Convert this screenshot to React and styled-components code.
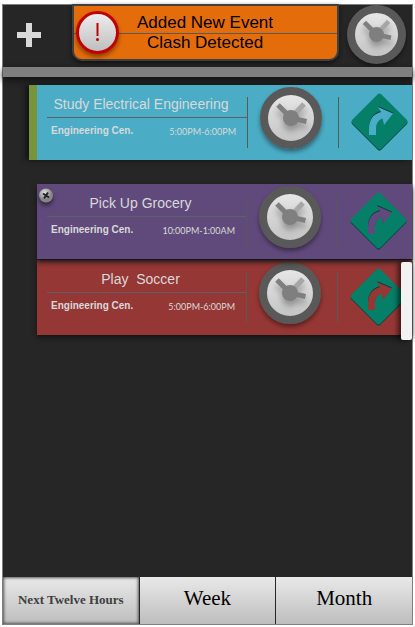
import React from "react";
import styled, { createGlobalStyle, css } from "styled-components";

const Global = createGlobalStyle`
  * { box-sizing: border-box; }
  body { margin: 0; background: #fff; font-family: "Liberation Sans", Arial, sans-serif; }
  button { font: inherit; color: inherit; margin: 0; padding: 0; border: 0; background: none; cursor: pointer; }
  svg { display: block; }
`;

const Page = styled.div`
  display: flex;
  min-height: 100vh;
  padding: 4px 2px 2px;
`;

const Frame = styled.main`
  flex: 1;
  display: flex;
  flex-direction: column;
  min-width: 0;
  background: #262626;
  border: 1px solid #7f7f7f;
`;

const Header = styled.header`
  display: grid;
  grid-template-columns: 69px minmax(0, 1fr) 73px;
  height: 62px;
`;

const AddButton = styled.button`
  display: flex;
  align-items: center;
  padding: 0 0 3px 14px;
`;

const Banner = styled.div`
  display: grid;
  grid-template-columns: 48px minmax(0, 1fr);
  align-items: center;
  height: 57px;
  margin-top: -1px;
  background: linear-gradient(#595959, #595959) 0 27px / 100% 1px no-repeat #e46c0a;
  border: 2px solid #404040;
  border-radius: 0 0 10px 10px;
  box-shadow: 0 2px 4px #111;
`;

const Alert = styled.div`
  width: 43px;
  height: 43px;
  margin-left: 2px;
  border: 3px solid #c00000;
  border-radius: 50%;
  background: linear-gradient(#ececec, #bfbfbf);
  box-shadow: 0 3px 4px rgba(0, 0, 0, 0.4);
`;

const BannerText = styled.p`
  margin: 0 49px 0 0;
  text-align: center;
  font-size: 17px;
  line-height: 20px;
  white-space: nowrap;
  color: #000;
`;

const HeaderDial = styled.div`
  display: flex;
  align-items: center;
  justify-content: flex-end;
  padding: 0 6px 3px 0;
`;

const DialButton = styled.button`
  width: ${(p) => p.$size}px;
  height: ${(p) => p.$size}px;
  border-radius: 50%;
  border: 8px solid #595959;
  background: linear-gradient(#ececec, #bfbfbf) border-box;
  box-shadow: 0 3px 4px rgba(0, 0, 0, 0.4);
  svg { filter: drop-shadow(0 5px 3px rgba(0, 0, 0, 0.3)); }
`;

const Divider = styled.div`
  height: 10px;
  background: #7f7f7f;
  box-shadow: 0 3px 6px #111;
`;

const Schedule = styled.section`
  position: relative;
  flex: 1;
  padding-top: 8px;
`;

const EventCard = styled.article`
  display: grid;
  grid-template-columns: minmax(0, 1fr) 91px 75px;
  height: 75px;
  margin-left: 34px;
  background: ${(p) => p.$color};
  box-shadow: 0 3px 5px #151515;
  ${(p) => p.$lead && css`
    grid-template-columns: minmax(0, 1fr) 91px 74px;
    margin-left: 26px;
    margin-bottom: 24px;
    border-left: 8px solid #77933c;
    box-shadow: -3px 0 5px #111;
  `}
  ${(p) => p.$pinned && css`
    position: relative;
    margin-bottom: 1px;
  `}
`;

const Details = styled.div`
  padding-top: 9px;
  color: #d9d9d9;
`;

const Title = styled.h2`
  height: 24px;
  margin: 0 0 0 10px;
  padding-right: 12px;
  border-bottom: 1px solid #5f6067;
  font-size: 14px;
  font-weight: 400;
  line-height: 20px;
  text-align: center;
  white-space: pre;
`;

const Meta = styled.div`
  display: flex;
  justify-content: space-between;
  align-items: center;
  padding: 5px 11px 0 14px;
  line-height: 14px;
  white-space: nowrap;
`;

const Place = styled.strong`
  font-size: 10px;
`;

const Time = styled.time`
  padding-top: 2px;
  font-family: Lato, sans-serif;
  font-size: 9px;
`;

const Cell = styled.div`
  display: flex;
  align-items: flex-start;
  padding: ${(p) => p.$pad};
  background: linear-gradient(#595959, #595959) 0 12px / 1px 51px no-repeat;
`;

const Screw = styled.div`
  position: absolute;
  top: 4px;
  left: 2px;
  filter: drop-shadow(0 3px 2px rgba(0, 0, 0, 0.5));
`;

const ScrollThumb = styled.div`
  position: absolute;
  top: 185px;
  right: 0;
  width: 11px;
  height: 78px;
  border-radius: 2px;
  background: #f2f2f2;
  box-shadow: -3px 0 5px rgba(0, 0, 0, 0.6);
`;

const Tabs = styled.nav`
  display: grid;
  grid-template-columns: repeat(3, minmax(0, 1fr));
  gap: 1px;
  height: 47px;
`;

const Tab = styled.button`
  padding-bottom: 5px;
  background: linear-gradient(#e9e9e9, #bdbdbd);
  font-family: "Liberation Serif", serif;
  font-size: 21px;
  color: #000;
  ${(p) => p.$active && css`
    padding-bottom: 2px;
    font-size: 13px;
    font-weight: 700;
    color: #404040;
    box-shadow: inset 0 0 3px 1px #555;
  `}
`;

function Dial({ size, label }) {
  const inner = size - 16;
  return (
    <DialButton $size={size} type="button" aria-label={label}>
      <svg width={inner} height={inner} viewBox="0 0 46 46">
        <g strokeWidth="5">
          <path d="M23 23 36 9" stroke="#a6a6a6" />
          <path d="M23 23 10 10M23 23 38.5 26.5" stroke="#7f7f7f" />
        </g>
        <circle cx="23" cy="23" r="8" fill="#7f7f7f" />
      </svg>
    </DialButton>
  );
}

const arrow = "M18 42V35C18 27 22 21 30 19L27 14 42 20.5 33 32 31.5 25.5C27 27 25 31 25 36V42Z";

function Directions({ color }) {
  return (
    <button type="button" aria-label="Directions">
      <svg width="57" height="58" viewBox="0 0 57 58">
        <path d="M27 2Q28.500 1 30 2L56 28Q57 29.500 56 31L30 57Q28.500 58 27 57L1 31Q0 29.500 1 28Z" fill="#083c3c" />
        <path d="M27 1Q28.500 0 30 1L56 27Q57 28.500 56 30L30 56Q28.500 57 27 56L1 30Q0 28.500 1 27Z" fill="#057f68" />
        <path d={arrow} fill="#073b3d" transform="translate(0 -1)" />
        <path d={arrow} fill={color} />
      </svg>
    </button>
  );
}

const events = [
  { title: "Study Electrical Engineering", time: "5:00PM-6:00PM", color: "#4bacc6", lead: true },
  { title: "Pick Up Grocery", time: "10:00PM-1:00AM", color: "#604a7b", pinned: true },
  { title: "Play  Soccer", time: "5:00PM-6:00PM", color: "#953735" },
];

export default function App() {
  return (
    <Page>
      <Global />
      <Frame>
        <Header>
          <AddButton type="button" aria-label="Add event">
            <svg width="24" height="24" viewBox="0 0 24 24">
              <path d="M9 0h6v9h9v6h-9v9H9v-9H0V9h9z" fill="#d9d9d9" />
            </svg>
          </AddButton>
          <Banner role="alert">
            <Alert>
              <svg width="37" height="37" viewBox="0 0 37 37" fill="#c00000">
                <path d="M17.500 9h2v13h-2z" />
                <circle cx="18.500" cy="25.500" r="1.500" />
              </svg>
            </Alert>
            <BannerText>
              Added New Event
              <br />
              Clash Detected
            </BannerText>
          </Banner>
          <HeaderDial>
            <Dial size={59} label="Settings" />
          </HeaderDial>
        </Header>
        <Divider />
        <Schedule>
          {events.map((e) => (
            <EventCard key={e.title} $color={e.color} $lead={e.lead} $pinned={e.pinned}>
              {e.pinned && (
                <Screw>
                  <svg width="14" height="15" viewBox="0 0 14 15">
                    <defs>
                      <radialGradient id="screw" cx="40%" cy="30%">
                        <stop offset="0" stopColor="#e4e4e4" />
                        <stop offset="1" stopColor="#858585" />
                      </radialGradient>
                    </defs>
                    <circle cx="7" cy="7.500" r="7" fill="url(#screw)" />
                    <path d="M4 5.500 10 9.500M9 4.500 5 10.500" stroke="#222" strokeWidth="2" />
                  </svg>
                </Screw>
              )}
              <Details>
                <Title>{e.title}</Title>
                <Meta>
                  <Place>Engineering Cen.</Place>
                  <Time>{e.time}</Time>
                </Meta>
              </Details>
              <Cell $pad="2px 0 0 13px">
                <Dial size={62} label={"Adjust " + e.title} />
              </Cell>
              <Cell $pad="8px 0 0 13px">
                <Directions color={e.color} />
              </Cell>
            </EventCard>
          ))}
          <ScrollThumb />
        </Schedule>
        <Tabs>
          <Tab type="button" $active>Next Twelve Hours</Tab>
          <Tab type="button">Week</Tab>
          <Tab type="button">Month</Tab>
        </Tabs>
      </Frame>
    </Page>
  );
}
